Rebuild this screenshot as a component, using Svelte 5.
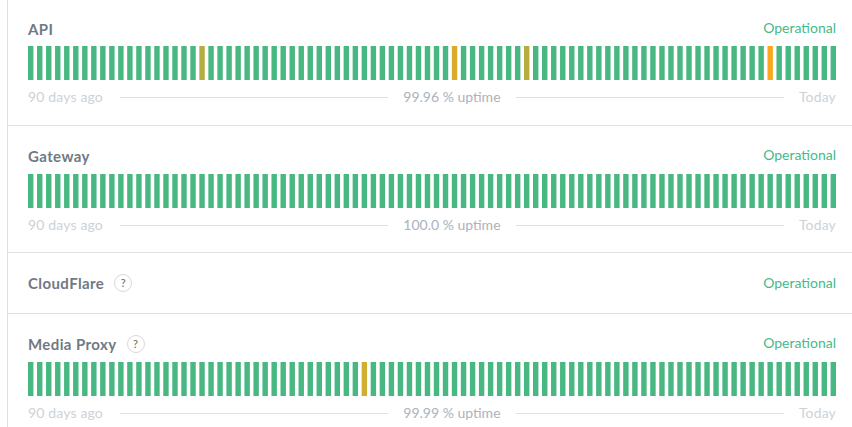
<script>
  const rows = [
    { name: 'API', pct: '99.96', marks: { 19: '#b5ad42', 47: '#dbaa2b', 55: '#b5ad42', 82: '#fca81f' } },
    { name: 'Gateway', pct: '100.0', marks: {} },
    { name: 'CloudFlare', help: true },
    { name: 'Media Proxy', help: true, pct: '99.99', marks: { 37: '#d0ad33' } }
  ];
  const days = Array.from({ length: 90 }, (_, i) => i);
</script>

<div class="list">
  {#each rows as row}
    <section class="row" class:compact={!row.pct}>
      <header class="head">
        <span class="name">{row.name}</span>
        {#if row.help}<span class="help">?</span>{/if}
        <span class="status">Operational</span>
      </header>
      {#if row.pct}
        <svg class="bars" viewBox="0 0 448 34" preserveAspectRatio="none" aria-hidden="true">
          {#each days as d}
            <rect x={d * 5} y="0" width="3" height="34" fill={row.marks[d] ?? '#48b781'} />
          {/each}
        </svg>
        <div class="legend">
          <span class="ago">90 days ago</span>
          <i></i>
          <span class="uptime">{row.pct} % uptime</span>
          <i></i>
          <span>Today</span>
        </div>
      {/if}
    </section>
  {/each}
</div>

<style>
  :global(body) {
    margin: 0;
    background: #fff;
  }
  .list {
    margin: -1px 0 0 7px;
    height: 428px;
    overflow: hidden;
    border-left: 1px solid #e0e0e0;
    font-family: Lato, "Open Sans", sans-serif;
    font-size: 14px;
    line-height: 20px;
  }
  .row {
    box-sizing: border-box;
    height: 127px;
    padding: 20px 16px 0 20px;
    border-bottom: 1px solid #e0e0e0;
  }
  .row.compact {
    height: 61px;
  }
  .head {
    display: flex;
    align-items: center;
    height: 20px;
  }
  .name {
    color: #717984;
    font-size: 15px;
    font-weight: 700;
    letter-spacing: 0.4px;
  }
  .help {
    box-sizing: border-box;
    display: flex;
    align-items: center;
    justify-content: center;
    width: 18px;
    height: 18px;
    margin-left: 10px;
    border: 1px solid #d8d8d8;
    border-radius: 50%;
    color: #666;
    font-size: 11px;
  }
  .status {
    margin-left: auto;
    color: #46b98a;
  }
  .row:not(.compact) .status {
    margin-top: -2px;
  }
  .bars {
    display: block;
    width: 100%;
    height: 34px;
    margin-top: 8px;
  }
  .row:first-child .bars {
    margin-top: 7px;
  }
  .legend {
    display: flex;
    align-items: center;
    margin-top: 7px;
    color: #ccd2d9;
    letter-spacing: 0.15px;
  }
  .ago {
    margin-right: 2px;
  }
  .legend i {
    flex: 1;
    height: 1px;
    margin: 0 15px;
    background: #e0e0e0;
  }
  .uptime {
    color: #aab3bd;
    letter-spacing: 0;
  }
</style>
